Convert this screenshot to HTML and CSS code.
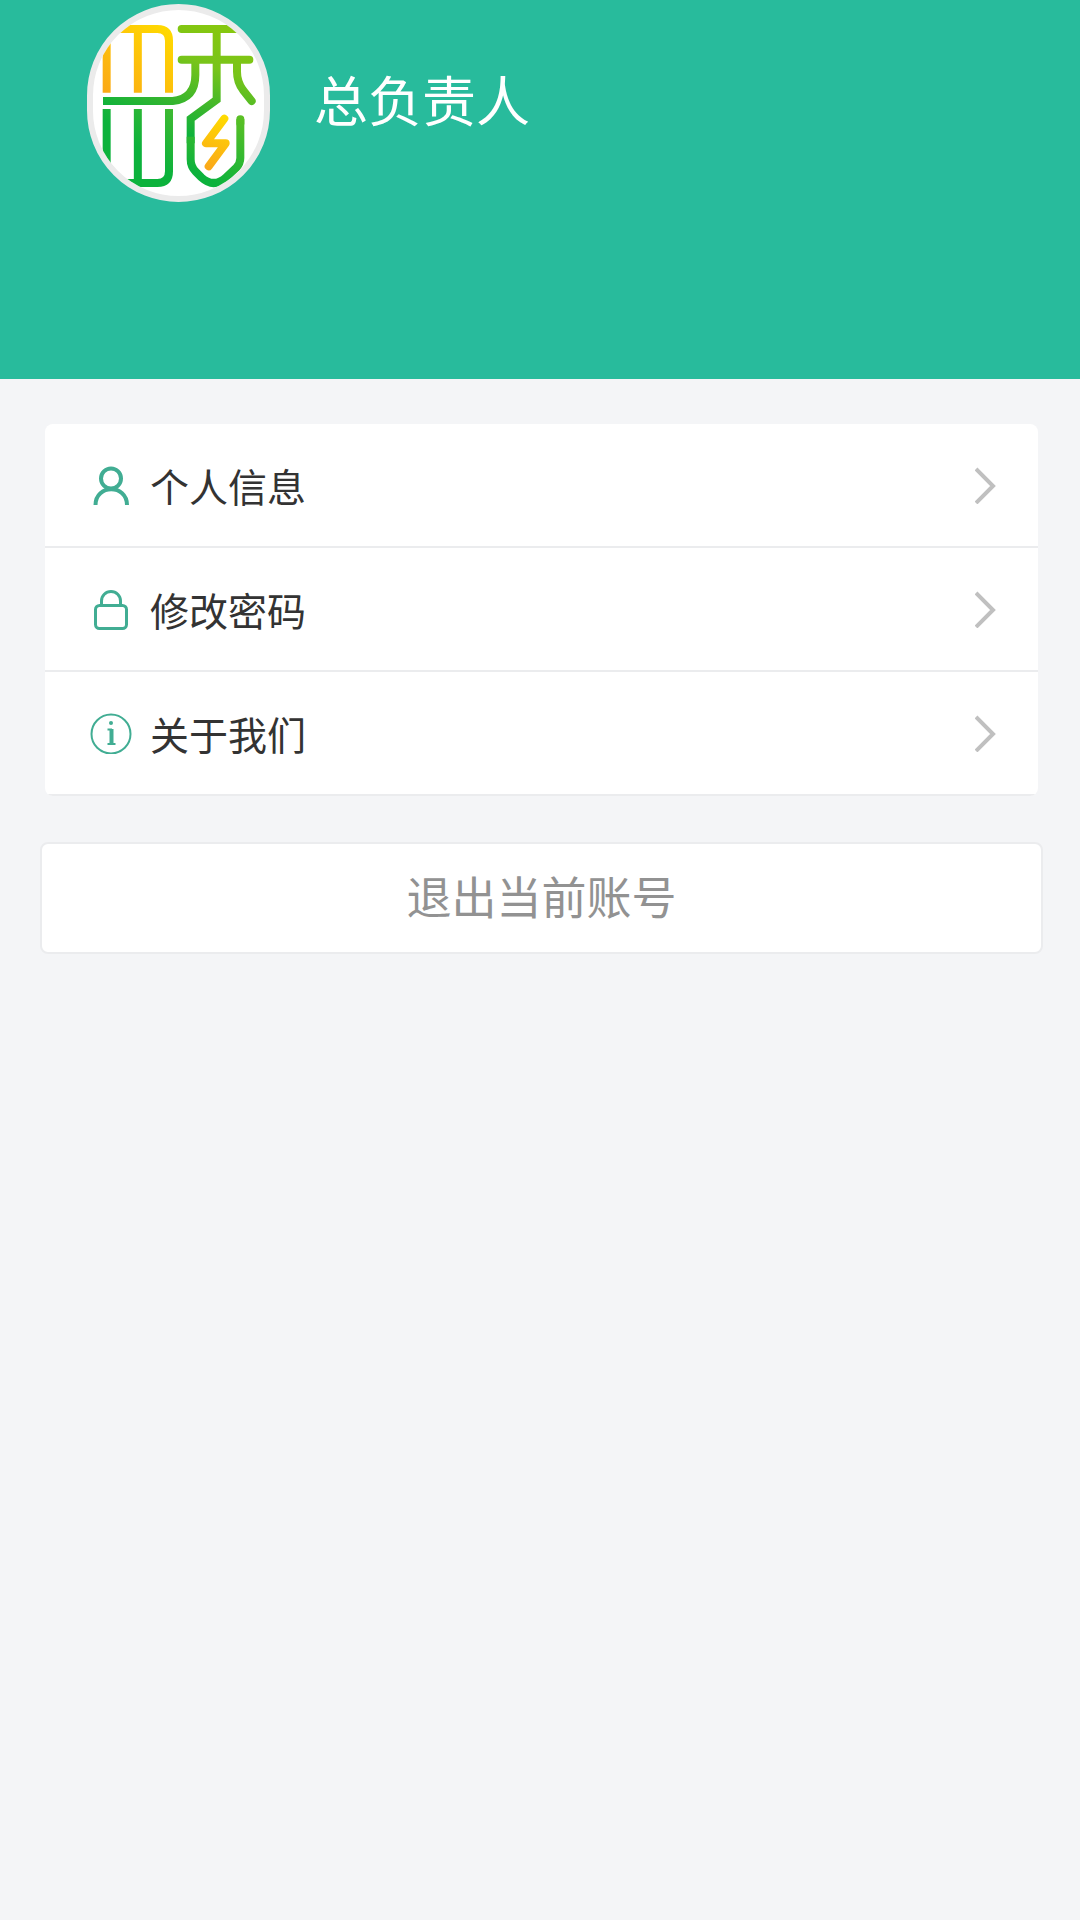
FILE: index.html
```html
<!DOCTYPE html>
<html lang="zh-CN">
<head>
<meta charset="utf-8">
<meta name="viewport" content="width=device-width, initial-scale=1">
<title>个人中心</title>
<link rel="stylesheet" href="styles.css">
</head>
<body>
<header class="profile">
  <div class="avatar">
    <svg class="logo" viewBox="69 30 513 558" preserveAspectRatio="none" aria-hidden="true">
      <defs>
        <linearGradient id="gold" gradientUnits="userSpaceOnUse" x1="280" y1="75" x2="110" y2="280">
          <stop offset="0" stop-color="#ffd900"/><stop offset="1" stop-color="#fba916"/>
        </linearGradient>
        <linearGradient id="leaf" gradientUnits="userSpaceOnUse" x1="440" y1="80" x2="330" y2="400">
          <stop offset="0" stop-color="#86c70f"/><stop offset="0.35" stop-color="#78c41a"/><stop offset="0.75" stop-color="#36b52e"/><stop offset="1" stop-color="#0cb23c"/>
        </linearGradient>
        <linearGradient id="stem" gradientUnits="userSpaceOnUse" x1="310" y1="330" x2="210" y2="450">
          <stop offset="0" stop-color="#3fba31"/><stop offset="1" stop-color="#0cb23c"/>
        </linearGradient>
        <linearGradient id="root" gradientUnits="userSpaceOnUse" x1="520" y1="350" x2="420" y2="540">
          <stop offset="0" stop-color="#5cc024"/><stop offset="1" stop-color="#0cb23c"/>
        </linearGradient>
        <linearGradient id="bolt" gradientUnits="userSpaceOnUse" x1="465" y1="345" x2="410" y2="510">
          <stop offset="0" stop-color="#ffdc00"/><stop offset="1" stop-color="#faa61a"/>
        </linearGradient>
      </defs>
      <g fill="none" stroke-width="24">
        <g stroke="url(#gold)">
          <path d="M110 278V110M203.500 278V87M140 87H262Q297 87 297 122V278"/>
        </g>
        <g stroke="url(#leaf)">
          <path stroke-linecap="round" d="M335 87H520M335 179H538"/>
          <path d="M440 87V299L362 356V430"/>
          <path d="M99 303H308Q376 296 376 225V180"/>
          <path stroke-linecap="round" d="M501 180V215Q501 245 519 270L545 303"/>
        </g>
        <g stroke="url(#stem)">
          <path d="M110 327V510M203.500 327V549M150 549H262Q297 549 297 514V327"/>
        </g>
        <path stroke="url(#root)" d="M362 410V478Q362 500 377 515L394 532Q431 566 468 532L499 503Q511 490 511 474V358"/>
        <path stroke="url(#root)" stroke-linecap="round" d="M511 370V358"/>
        <path stroke="url(#bolt)" stroke-linecap="round" stroke-linejoin="round" d="M463 356L408 430H467L416 499"/>
      </g>
    </svg>
  </div>
  <h1 class="name">总负责人</h1>
</header>
<main class="content">
  <nav class="menu">
    <a class="item" href="#profile">
      <svg class="icon bold" viewBox="0 0 42 42" aria-hidden="true"><circle cx="21" cy="14.500" r="10"/><path d="M5.500 41C5.500 20 37 20 37 41"/></svg>
      <span class="label">个人信息</span>
      <svg class="arrow" viewBox="0 0 22 38" aria-hidden="true"><path d="M1 3L18 20L1 37"/></svg>
    </a>
    <a class="item" href="#password">
      <svg class="icon" viewBox="0 0 42 42" aria-hidden="true"><rect x="5.500" y="17.500" width="31" height="23" rx="4"/><path d="M11.500 18V13A9.500 9.500 0 0 1 30.500 13V18"/></svg>
      <span class="label">修改密码</span>
      <svg class="arrow" viewBox="0 0 22 38" aria-hidden="true"><path d="M1 3L18 20L1 37"/></svg>
    </a>
    <a class="item" href="#about">
      <svg class="icon thin" viewBox="0 0 42 42" aria-hidden="true"><circle cx="21" cy="22" r="19.500"/><circle class="dot" cx="21" cy="11" r="2"/><path d="M17.500 17.500H22M17.500 32H25.500"/><path class="bar" d="M21.500 17V32"/></svg>
      <span class="label">关于我们</span>
      <svg class="arrow" viewBox="0 0 22 38" aria-hidden="true"><path d="M1 3L18 20L1 37"/></svg>
    </a>
  </nav>
  <button class="logout" type="button">退出当前账号</button>
</main>
</body>
</html>
```
FILE: styles.css
```css
* {
  box-sizing: border-box;
}

body {
  margin: 0;
  min-height: 100vh;
  background: #f4f5f7;
  color: #333;
  font-family: "Noto Sans CJK SC", sans-serif;
}

.profile {
  display: flex;
  align-items: flex-start;
  gap: 44px;
  height: 379px;
  padding: 4px 87px;
  background: #28bb9c;
}

.avatar {
  flex: none;
  width: 183px;
  height: 198px;
  border: 6px solid #ebebeb;
  border-radius: 92px;
  background: #fff;
  overflow: hidden;
}

.logo {
  display: block;
  width: 100%;
  height: 100%;
}

.name {
  margin: 0;
  color: #fff;
  font-size: 54px;
  font-weight: 400;
  line-height: 190px;
}

.content {
  display: flex;
  flex-direction: column;
  gap: 46px;
  padding: 45px 37px 45px 40px;
}

.menu {
  margin: 0 5px;
  border-radius: 8px;
  background: #fff;
  overflow: hidden;
}

.item {
  display: flex;
  align-items: center;
  gap: 18px;
  height: 124px;
  padding: 0 41px 0 45px;
  border-bottom: 2px solid #ebecee;
  color: #333;
  font-size: 39px;
  line-height: 58px;
  text-decoration: none;
}

.icon,
.arrow {
  flex: none;
  fill: none;
  stroke: #41ad93;
  stroke-width: 3;
}

.icon {
  width: 42px;
  height: 42px;
}

.bold {
  stroke-width: 4;
}

.thin {
  stroke-width: 2;
}

.dot {
  fill: #41ad93;
  stroke: none;
}

.bar {
  stroke-width: 4;
}

.label {
  flex: 1;
}

.arrow {
  width: 22px;
  height: 38px;
  stroke: #c0c0c0;
  stroke-width: 4;
}

.logout {
  height: 112px;
  padding: 0 0 4px;
  border: 2px solid #ebecee;
  border-radius: 8px;
  background: #fff;
  color: #929292;
  font-family: inherit;
  font-size: 45px;
  line-height: 66px;
}
```
